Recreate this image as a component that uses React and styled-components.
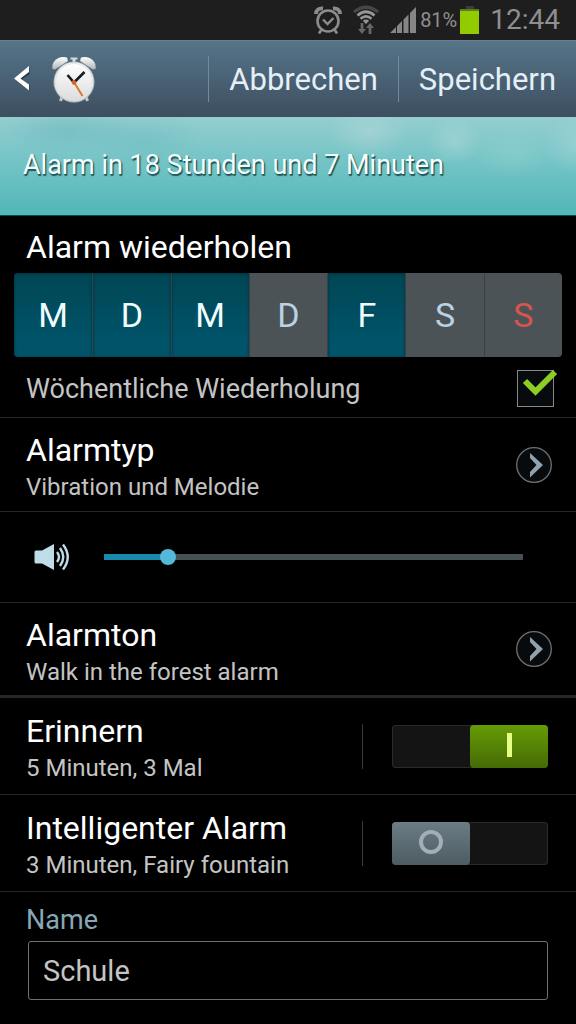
import React, { useState } from 'react'
import styled, { createGlobalStyle } from 'styled-components'

const GlobalStyle = createGlobalStyle`
  *, *::before, *::after {
    box-sizing: border-box;
  }
  body {
    margin: 0;
    background: #000;
    color: #fff;
    font-family: Roboto, "Liberation Sans", sans-serif;
  }
  button, input {
    font: inherit;
    color: inherit;
    margin: 0;
  }
`

const days = [
  { id: 'mo', label: 'M', name: 'Montag' },
  { id: 'di', label: 'D', name: 'Dienstag' },
  { id: 'mi', label: 'M', name: 'Mittwoch' },
  { id: 'do', label: 'D', name: 'Donnerstag' },
  { id: 'fr', label: 'F', name: 'Freitag' },
  { id: 'sa', label: 'S', name: 'Samstag' },
  { id: 'so', label: 'S', name: 'Sonntag' },
]

const StatusAlarmIcon = () => (
  <svg width="28" height="28" viewBox="0 0 28 28" fill="none" stroke="#8c8c8c">
    <circle cx="14" cy="15" r="10.500" strokeWidth="2.600" />
    <path d="M9 13.500l4.500 4.500 6-6" strokeWidth="2.400" />
    <path d="M2 8C2 4 5 2 9 2.500M26 8C26 4 23 2 19 2.500" strokeWidth="3.800" />
    <path d="M7.500 23.500l-2.500 4M20.500 23.500l2.500 4" strokeWidth="2.600" />
  </svg>
)

const WifiIcon = () => (
  <svg width="26" height="30" viewBox="0 0 26 30" fill="none">
    <path d="M1 7Q13-2.500 25 7" stroke="#464646" strokeWidth="3.200" />
    <path d="M4.500 10.500Q13 3 21.500 10.500" stroke="#969696" strokeWidth="2.800" />
    <path d="M7.500 13.800Q13 9 18.500 13.800" stroke="#969696" strokeWidth="2.600" />
    <path d="M9.800 15.800Q13 13 16.200 15.800L13 19z" fill="#969696" />
    <path d="M9 18v7M17 29v-7" stroke="#666" strokeWidth="2.800" />
    <path d="M5 24h8l-4 5zM13 23h8l-4-5z" fill="#666" />
  </svg>
)

const SignalIcon = () => (
  <svg width="26" height="26" viewBox="0 0 26 26" fill="#868686">
    <path d="M0 26l6-6v6zM7 19l5-5v12H7zM13.500 12.500l5-5V26h-5zM20 6l6-6v26h-6z" />
  </svg>
)

const BatteryIcon = () => (
  <svg width="19" height="28" viewBox="0 0 19 28">
    <path d="M6 0h8v3H6z" fill="#3c3c3c" />
    <path d="M0 3h19v2H0z" fill="#5f7a20" />
    <path d="M0 5h19v23H0z" fill="#91cb00" />
  </svg>
)

const BackIcon = () => (
  <svg width="17" height="26" viewBox="0 0 17 26">
    <path d="M15.500 2v6L8 13l7.500 6v6L1 13.500z" fill="#243340" />
    <path d="M15 0v6L6.500 12.500l8.500 6v6L0 12.500z" fill="#fff" />
  </svg>
)

const ClockLogo = () => (
  <svg width="46" height="48" viewBox="0 0 46 48">
    <defs>
      <linearGradient id="bell" x1="0" y1="0" x2="0" y2="1">
        <stop offset="0" stopColor="#fff" />
        <stop offset="1" stopColor="#aeb4b8" />
      </linearGradient>
      <linearGradient id="face" x1="0" y1="0" x2="0" y2="1">
        <stop offset="0" stopColor="#fff" />
        <stop offset="1" stopColor="#dcdcdc" />
      </linearGradient>
    </defs>
    <path d="M11.500 40l-2 6M34.500 40l2 6" stroke="#c3c9cc" strokeWidth="3" />
    <path d="M19.500 2.500h7v2h-7zM21.500 4.500h3v5h-3z" fill="#d5dadd" />
    <path d="M1.500 14C0 7 7 0 16 2.500L17 6 4 14.500z" fill="url(#bell)" />
    <path d="M44.500 14C46 7 39 0 30 2.500L29 6l13 8.500z" fill="url(#bell)" />
    <circle cx="23" cy="27" r="20.500" fill="#b6babd" />
    <circle cx="23" cy="27" r="19.500" fill="url(#face)" />
    <circle cx="23" cy="27" r="18.500" fill="none" stroke="#dcdedf" strokeWidth="0.800" />
    <path d="M16.500 20l6.500 7.500L33.500 17" fill="none" stroke="#1c1c1c" strokeWidth="2.600" />
    <path d="M22 25.500l9.500 15.500" stroke="#d9772f" strokeWidth="2" />
    <circle cx="23" cy="27.500" r="2.200" fill="#d9622a" />
  </svg>
)

const SpeakerIcon = () => (
  <svg width="36" height="28" viewBox="0 0 36 28">
    <path d="M0.500 9q0-1.500 1.500-1.500h6L20 1v26L8 20.500H2q-1.500 0-1.500-1.500z" fill="#bedde8" />
    <g fill="none" stroke="#bedde8" strokeWidth="2.400">
      <path d="M23 9q4 5 0 10" />
      <path d="M26 5q6.500 9 0 18" />
      <path d="M29 1.500q9.500 12.500 0 25" />
    </g>
  </svg>
)

const MoreIcon = () => (
  <svg width="36" height="36" viewBox="0 0 36 36">
    <circle cx="18" cy="18" r="17.300" fill="#070b0e" stroke="#6f7172" strokeWidth="1.300" />
    <path d="M14 6v5l6.500 7-6.500 7v5.500L27 18z" fill="#91a1ae" />
  </svg>
)

const App = () => {
  const [active, setActive] = useState(['mo', 'di', 'mi', 'fr'])
  const [weekly, setWeekly] = useState(true)
  const [volume, setVolume] = useState(14)
  const [snooze, setSnooze] = useState(true)
  const [smart, setSmart] = useState(false)
  const [name, setName] = useState('Schule')

  const toggleDay = (id) => {
    setActive(active.includes(id) ? active.filter((d) => d !== id) : [...active, id])
  }

  return (
    <>
      <GlobalStyle />
      <StatusBar>
        <StatusAlarmIcon />
        <WifiIcon />
        <SignalIcon />
        <Battery>
          81%
          <BatteryIcon />
        </Battery>
        <Time>12:44</Time>
      </StatusBar>
      <ActionBar>
        <BackButton aria-label="Zurück">
          <BackIcon />
          <ClockLogo />
        </BackButton>
        <ActionButton>Abbrechen</ActionButton>
        <ActionButton>Speichern</ActionButton>
      </ActionBar>
      <Banner>Alarm in 18 Stunden und 7 Minuten</Banner>
      <main>
        <RepeatSection>
          <Title>Alarm wiederholen</Title>
          <DayPicker>
            {days.map((day) => (
              <DayButton
                key={day.id}
                aria-label={day.name}
                aria-pressed={active.includes(day.id)}
                $active={active.includes(day.id)}
                $sunday={day.id === 'so'}
                onClick={() => toggleDay(day.id)}
              >
                {day.label}
              </DayButton>
            ))}
          </DayPicker>
        </RepeatSection>
        <WeeklyRow>
          <label htmlFor="weekly">Wöchentliche Wiederholung</label>
          <CheckWrap>
            <CheckInput
              id="weekly"
              type="checkbox"
              checked={weekly}
              onChange={(e) => setWeekly(e.target.checked)}
            />
            {weekly && (
              <CheckMark viewBox="0 0 36 28">
                <path d="M3 12l10.500 10.500L33 3" fill="none" stroke="#8ccf22" strokeWidth="6" />
              </CheckMark>
            )}
          </CheckWrap>
        </WeeklyRow>
        <LinkRow>
          <LinkText>
            <Title>Alarmtyp</Title>
            <Summary>Vibration und Melodie</Summary>
          </LinkText>
          <MoreIcon />
        </LinkRow>
        <VolumeRow>
          <SpeakerIcon />
          <VolumeSlider
            type="range"
            min="0"
            max="100"
            aria-label="Lautstärke"
            value={volume}
            onChange={(e) => setVolume(Number(e.target.value))}
            style={{ '--level': `${volume}%` }}
          />
        </VolumeRow>
        <LinkRow $last>
          <LinkText>
            <Title>Alarmton</Title>
            <Summary>Walk in the forest alarm</Summary>
          </LinkText>
          <MoreIcon />
        </LinkRow>
        <SwitchRow>
          <SwitchLabel htmlFor="snooze">
            <Title as="span">Erinnern</Title>
            <Summary as="span">5 Minuten, 3 Mal</Summary>
          </SwitchLabel>
          <Divider />
          <Switch
            id="snooze"
            type="checkbox"
            role="switch"
            checked={snooze}
            onChange={(e) => setSnooze(e.target.checked)}
          />
        </SwitchRow>
        <SwitchRow>
          <SwitchLabel htmlFor="smart">
            <Title as="span">Intelligenter Alarm</Title>
            <Summary as="span">3 Minuten, Fairy fountain</Summary>
          </SwitchLabel>
          <Divider />
          <Switch
            id="smart"
            type="checkbox"
            role="switch"
            checked={smart}
            onChange={(e) => setSmart(e.target.checked)}
          />
        </SwitchRow>
        <NameSection>
          <NameLabel htmlFor="name">Name</NameLabel>
          <NameInput id="name" type="text" value={name} onChange={(e) => setName(e.target.value)} />
        </NameSection>
      </main>
    </>
  )
}

const StatusBar = styled.div`
  display: flex;
  align-items: center;
  justify-content: flex-end;
  gap: 11px;
  height: 40px;
  padding: 0 16px;
  background: #1e1e1e;
  color: #8f8f8f;
`

const Battery = styled.div`
  display: flex;
  align-items: center;
  gap: 3px;
  margin-left: -7px;
  font-size: 20px;
`

const Time = styled.time`
  font-size: 28px;
  line-height: 40px;
`

const ActionBar = styled.header`
  display: flex;
  align-items: center;
  height: 77px;
  border-top: 1px solid #6b7f8c;
  background: linear-gradient(#567488, #3d4e60);
`

const BackButton = styled.button`
  display: flex;
  align-items: center;
  gap: 20px;
  margin-right: auto;
  padding: 0 0 0 14px;
  border: 0;
  background: none;
`

const ActionButton = styled.button`
  height: 46px;
  padding: 2px 20px 0;
  border: 0;
  border-left: 1px solid #74899a;
  background: none;
  color: #e4eff8;
  font-size: 31px;
  line-height: 44px;
`

const Banner = styled.p`
  margin: 0;
  padding: 32px 23px 34px;
  border-bottom: 1px solid #0e4b50;
  background:
    radial-gradient(70px 24px at 12% 14%, rgba(104, 180, 188, 0.5), transparent),
    radial-gradient(60px 26px at 25% 22%, rgba(104, 184, 190, 0.4), transparent),
    radial-gradient(40px 28px at 64% 14%, rgba(178, 214, 216, 0.6), transparent),
    radial-gradient(28px 24px at 79% 24%, rgba(168, 216, 216, 0.6), transparent),
    radial-gradient(40px 26px at 89% 36%, rgba(146, 208, 206, 0.5), transparent),
    radial-gradient(34px 30px at 100% 28%, rgba(160, 214, 214, 0.6), transparent),
    linear-gradient(#94ced0, #74c4c6 45%, #52b6b7);
  color: #f4ffff;
  font-size: 27px;
  line-height: 32px;
  text-shadow: 1px 1px 1px #24595e, 1px 2px 1px #24595e;
`

const Title = styled.h2`
  margin: 0;
  font-size: 32px;
  font-weight: 400;
  line-height: 40px;
`

const Summary = styled.p`
  margin: 0;
  color: #c4c4c4;
  font-size: 24px;
  line-height: 34px;
`

const RepeatSection = styled.section`
  padding: 11px 14px 0;

  ${Title} {
    padding: 0 12px;
  }
`

const DayPicker = styled.div`
  display: grid;
  grid-template-columns: repeat(7, 1fr);
  height: 84px;
  margin-top: 6px;
  border-radius: 4px;
  overflow: hidden;
`

const DayButton = styled.button`
  padding: 0;
  border: 0;
  background: ${({ $active }) => ($active ? 'linear-gradient(#004654, #005369 80%)' : '#4c5356')};
  color: ${({ $active, $sunday }) => ($sunday ? '#d9534f' : $active ? '#f0fdff' : '#b9d2e4')};
  box-shadow: ${({ $active }) => ($active ? 'inset 0 1px 3px #00303c' : 'none')};
  font-size: 34px;

  & + & {
    border-left: 1px solid ${({ $active }) => ($active ? '#1b6273' : '#393f42')};
  }
`

const Row = styled.div`
  display: flex;
  align-items: center;
  justify-content: space-between;
  border-bottom: 1px solid #262626;
`

const WeeklyRow = styled(Row)`
  height: 61px;
  padding: 3px 22px 0 26px;
  color: #c4c4c4;
  font-size: 27px;
  line-height: 32px;
`

const CheckWrap = styled.div`
  position: relative;
  height: 37px;
`

const CheckInput = styled.input`
  appearance: none;
  display: block;
  width: 37px;
  height: 37px;
  border: 1px solid #858788;
  background: #070b0e;
`

const CheckMark = styled.svg`
  position: absolute;
  top: -1px;
  right: -4px;
  width: 36px;
  height: 28px;
  pointer-events: none;
`

const LinkRow = styled(Row)`
  height: ${({ $last }) => ($last ? '95px' : '94px')};
  padding: 0 24px 0 26px;
  border-bottom-width: ${({ $last }) => ($last ? '3px' : '1px')};
`

const LinkText = styled.div`
  padding-top: 5px;
`

const VolumeRow = styled(Row)`
  gap: 34px;
  height: 91px;
  padding: 0 53px 0 34px;
`

const VolumeSlider = styled.input`
  appearance: none;
  flex: 1;
  min-width: 0;
  height: 16px;
  background: linear-gradient(90deg, #1789aa var(--level), #465052 var(--level)) center / 100% 6px no-repeat;

  &::-webkit-slider-thumb {
    appearance: none;
    width: 16px;
    height: 16px;
    border-radius: 50%;
    background: #54b9d8;
  }
`

const SwitchRow = styled(Row)`
  padding-right: 28px;
`

const SwitchLabel = styled.label`
  display: flex;
  flex-direction: column;
  flex: 1;
  padding: 13px 0 9px 26px;
`

const Divider = styled.span`
  width: 1px;
  height: 45px;
  margin-right: 29px;
  background: #3a3a3a;
`

const Switch = styled.input`
  appearance: none;
  display: grid;
  grid-template-columns: 1fr 1fr;
  width: 156px;
  height: 43px;
  border-radius: 4px;
  background: #141414;
  box-shadow: inset 0 0 0 1px #2b2b2b;

  &::before, &::after {
    content: '';
    grid-row: 1;
    grid-column: 1;
  }
  &::before {
    border-radius: 4px;
    background: linear-gradient(#6b7c84, #4e5c63);
  }
  &::after {
    place-self: center;
    width: 24px;
    height: 24px;
    margin-bottom: 2px;
    border: 4px solid #a3afb6;
    border-radius: 50%;
  }
  &:checked::before, &:checked::after {
    grid-column: 2;
  }
  &:checked::before {
    background: linear-gradient(#659c05, #456b05);
  }
  &:checked::after {
    width: 5px;
    border: 0;
    border-radius: 0;
    background: #e6ff85;
  }
`

const NameSection = styled.section`
  padding: 12px 28px 24px;
`

const NameLabel = styled.label`
  display: block;
  margin: 0 -2px 5px;
  color: #86a8b5;
  font-size: 27px;
  line-height: 32px;
`

const NameInput = styled.input`
  display: block;
  width: 100%;
  height: 59px;
  padding: 0 14px;
  border: 1px solid #6e7172;
  border-radius: 3px;
  background: #000;
  color: #c4c4c4;
  font-size: 29px;
`

export default App
